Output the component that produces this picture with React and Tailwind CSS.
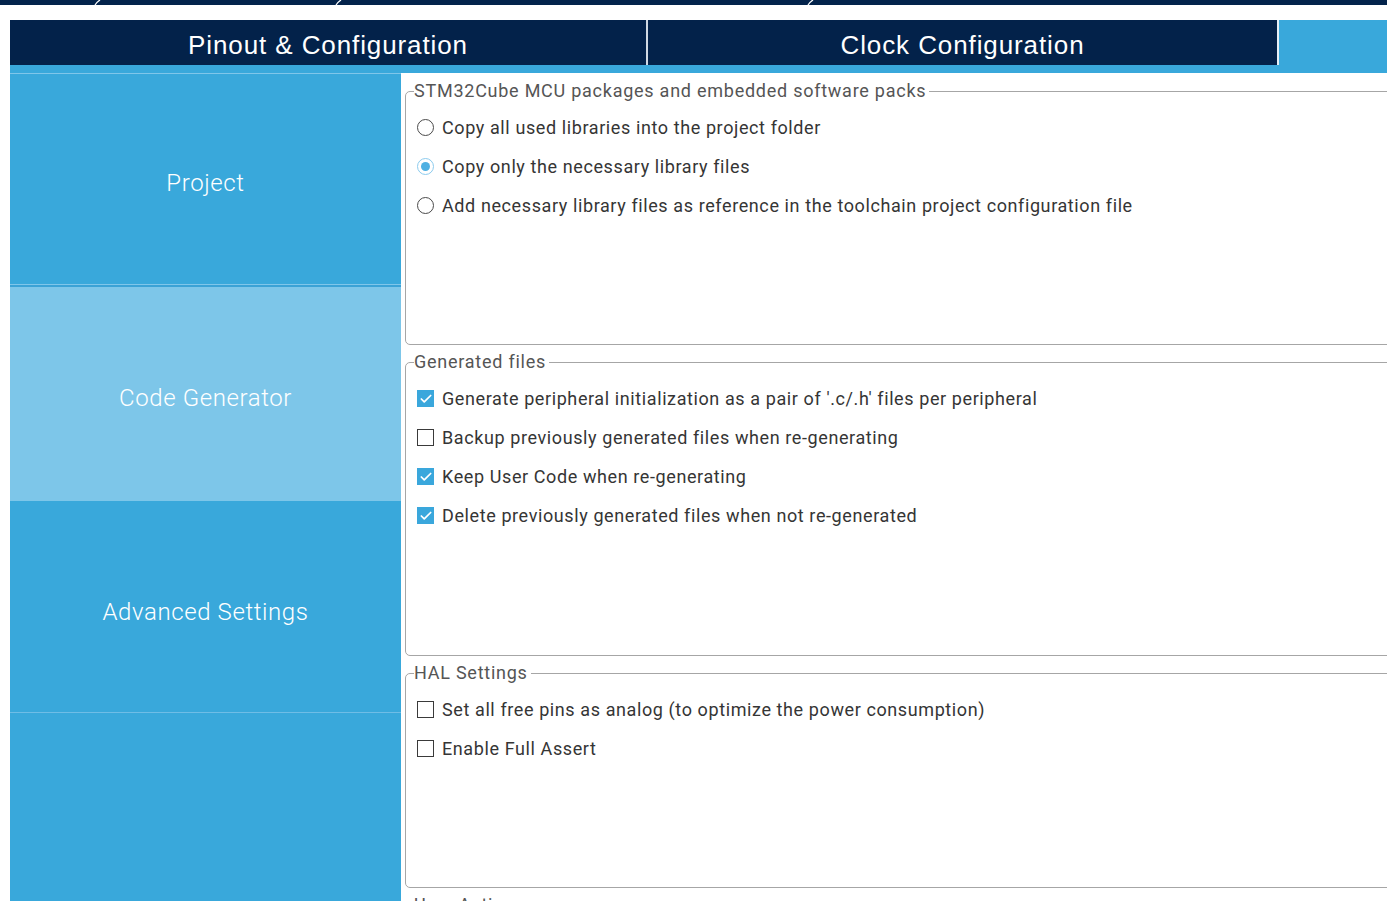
import { Check } from 'lucide-react';

const sections = [
  {
    title: 'STM32Cube MCU packages and embedded software packs',
    height: 'h-[242px]',
    items: [
      { type: 'radio', label: 'Copy all used libraries into the project folder', on: false },
      { type: 'radio', label: 'Copy only the necessary library files', on: true },
      { type: 'radio', label: 'Add necessary library files as reference in the toolchain project configuration file', on: false },
    ],
  },
  {
    title: 'Generated files',
    height: 'h-[282px]',
    items: [
      { type: 'check', label: "Generate peripheral initialization as a pair of '.c/.h' files per peripheral", on: true },
      { type: 'check', label: 'Backup previously generated files when re-generating', on: false },
      { type: 'check', label: 'Keep User Code when re-generating', on: true },
      { type: 'check', label: 'Delete previously generated files when not re-generated', on: true },
    ],
  },
  {
    title: 'HAL Settings',
    height: 'h-[203px]',
    items: [
      { type: 'check', label: 'Set all free pins as analog (to optimize the power consumption)', on: false },
      { type: 'check', label: 'Enable Full Assert', on: false },
    ],
  },
  {
    title: 'User Actions',
    height: 'h-[200px]',
    items: [],
  },
];

const Radio = ({ on }) =>
  on ? (
    <span className="flex h-[17px] w-[17px] shrink-0 items-center justify-center rounded-full border border-[#8ccbee] bg-white">
      <span className="h-[9px] w-[9px] rounded-full bg-[#4fb0e2]"></span>
    </span>
  ) : (
    <span className="h-[17px] w-[17px] shrink-0 rounded-full border border-[#4a4a4a] bg-white"></span>
  );

const Checkbox = ({ on }) =>
  on ? (
    <span className="flex h-[17px] w-[17px] shrink-0 items-center justify-center bg-[#3aa7dc]">
      <Check size={14} strokeWidth={3} className="text-white" />
    </span>
  ) : (
    <span className="h-[17px] w-[17px] shrink-0 border border-[#3a3a3a] bg-white"></span>
  );

const Group = ({ section, first }) => (
  <fieldset
    className={`${first ? 'mt-[7px]' : 'mt-[6px]'} w-[1010px] rounded-[5px] border border-[#a6a6a6] pl-[8px] tracking-[0.6px]`}
  >
    <legend className="pr-[3px] text-[18px] leading-[22px] tracking-[0.75px] text-[#555555]">{section.title}</legend>
    <div className={`${section.height} pt-[6px] pl-[3px]`}>
      {section.items.map((item, i) => (
        <div key={i} className="flex h-[39px] items-center gap-[8px] text-[18px] text-[#353535]">
          {item.type === 'radio' ? <Radio on={item.on} /> : <Checkbox on={item.on} />}
          <span className="whitespace-nowrap">{item.label}</span>
        </div>
      ))}
    </div>
  </fieldset>
);

const App = () => {
  return (
    <div className="h-[901px] w-[1387px] overflow-hidden bg-white font-['Roboto',sans-serif]">
      <div className="h-[5px] bg-[#03234b]">
        <svg width="1387" height="5" className="block">
          <path d="M95 5 Q97 2 100 0" stroke="#fff" strokeWidth="1.3" fill="none" />
          <path d="M336 5 Q338 2 341 0" stroke="#fff" strokeWidth="1.3" fill="none" />
          <path d="M808 5 Q810 2 813 0" stroke="#fff" strokeWidth="1.3" fill="none" />
        </svg>
      </div>

      <div className="ml-[10px] mt-[15px]">
        <div className="flex h-[45px] bg-[#39a8db]">
          <div className="flex w-[636px] items-center justify-center bg-[#03224a] pt-[5px] font-['Liberation_Sans',sans-serif] text-[26px] tracking-[0.9px] text-white">
            Pinout &amp; Configuration
          </div>
          <div className="w-[2px] bg-[#cfd8e3]"></div>
          <div className="flex w-[629px] items-center justify-center bg-[#03224a] pt-[5px] font-['Liberation_Sans',sans-serif] text-[26px] tracking-[0.9px] text-white">
            Clock Configuration
          </div>
          <div className="w-[2px] bg-[#e6eef5]"></div>
        </div>
        <div className="h-[8px] bg-[#39a8db]"></div>

        <div className="flex">
          <div className="h-[828px] w-[391px] shrink-0 bg-[#39a8db] text-[24px] font-light tracking-[0.6px] text-white">
            <div className="h-px bg-[#7fc6ea]"></div>
            <div className="flex h-[210px] items-center justify-center pt-[7px]">Project</div>
            <div className="h-px bg-[#7fc6ea]"></div>
            <div className="h-[2px] bg-[#3aa2d6]"></div>
            <div className="flex h-[214px] items-center justify-center bg-[#7dc6e9] pt-[7px]">Code Generator</div>
            <div className="flex h-[211px] items-center justify-center pt-[10px]">Advanced Settings</div>
            <div className="h-px bg-[#6fbde6]"></div>
          </div>

          <div className="ml-[3px] w-[1000px] shrink-0 overflow-hidden border-l border-transparent">
            {sections.map((s, i) => (
              <Group key={i} section={s} first={i === 0} />
            ))}
          </div>
        </div>
      </div>
    </div>
  );
};

export default App;
